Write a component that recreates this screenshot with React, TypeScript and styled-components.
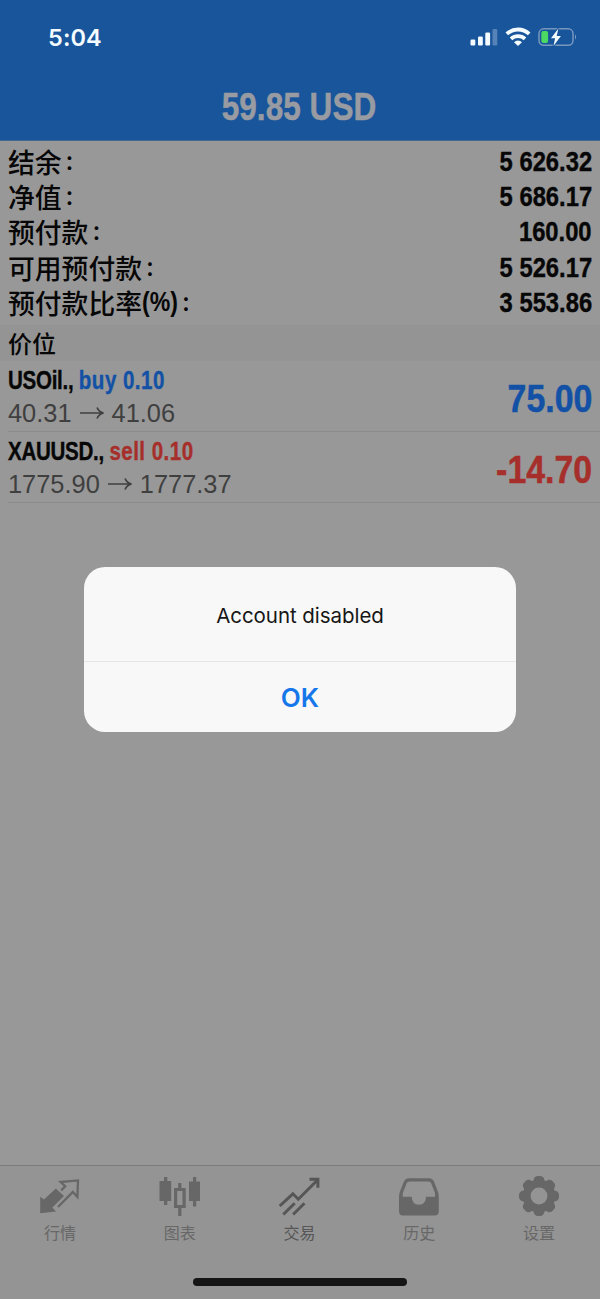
import React from "react";
import styled, { createGlobalStyle } from "styled-components";

const GlobalStyle = createGlobalStyle`
  *, *::before, *::after { box-sizing: border-box; }
  body { margin: 0; background: #989898; }
`;

const sans = `Inter, "Noto Sans CJK SC", sans-serif`;
const grotesk = `"Liberation Sans", "Noto Sans CJK SC", sans-serif`;

const Screen = styled.div`
  position: relative;
  display: flex;
  flex-direction: column;
  width: 600px;
  height: 1299px;
  overflow: hidden;
  background: #989898;
  color: #070707;
  font-family: ${sans};
`;

const Header = styled.header`
  display: flex;
  flex-direction: column;
  flex: none;
  height: 141px;
  background: #19559b;
  border-bottom: 1px solid #46688f;
`;

const StatusBar = styled.div`
  display: flex;
  align-items: center;
  justify-content: space-between;
  height: 74px;
  padding: 0 22px 0 48px;
`;

const Clock = styled.span`
  color: #f4fbff;
  font-size: 23.5px;
  font-weight: 600;
  letter-spacing: 0.1px;
`;

const StatusIcons = styled.div`
  display: flex;
  align-items: center;
`;

const Title = styled.h1`
  margin: 0;
  color: #999ba2;
  font-family: ${grotesk};
  font-size: 39px;
  font-weight: 700;
  line-height: 65px;
  text-align: center;
  -webkit-text-stroke: 0.5px currentColor;
  transform: translateX(-1px) scaleX(0.81);
`;

const Summary = styled.dl`
  flex: none;
  height: 184px;
  margin: 0;
  padding: 3px 8px 0;
`;

const SummaryRow = styled.div`
  display: flex;
  align-items: center;
  justify-content: space-between;
  height: 35.2px;
`;

const Label = styled.dt`
  display: flex;
  font-family: "Noto Sans CJK SC", sans-serif;
  font-size: 26.8px;
  font-weight: 500;
  line-height: 35px;
`;

const Unit = styled.span`
  width: 36px;
  font-family: ${grotesk};
  font-weight: 700;
  transform: scaleX(0.86);
  transform-origin: left;
`;

const Colon = styled.span`
  margin: -1px 0 1px 4px;
  font-family: ${sans};
  font-size: 26px;
`;

const Figure = styled.dd`
  margin: 0;
  padding-top: 2px;
  font-family: ${grotesk};
  font-size: 27px;
  font-weight: 700;
  line-height: 35px;
  -webkit-text-stroke: 0.4px currentColor;
  transform: scaleX(0.88);
  transform-origin: right;
`;

const SectionTitle = styled.h2`
  flex: none;
  height: 36px;
  margin: 0;
  padding-left: 8px;
  background: #949494;
  font-size: 24px;
  font-weight: 500;
  line-height: 40px;
`;

const Position = styled.article`
  display: flex;
  align-items: center;
  justify-content: space-between;
  flex: none;
  height: 71px;
  margin-left: 8px;
  padding-right: 8px;
  border-bottom: 1px solid #8b8b8c;
`;

const tone = { buy: "#1251a5", sell: "#a62f2b" };
type Side = keyof typeof tone;

const Deal = styled.div`
  padding-top: 1px;
  font-family: ${grotesk};
  font-size: 26px;
  font-weight: 700;
  line-height: 33px;
  letter-spacing: -0.35px;
  white-space: pre;
  -webkit-text-stroke: 0.4px currentColor;
  transform: scaleX(0.79);
  transform-origin: left;
`;

const Volume = styled.span<{ $side: Side }>`
  color: ${(p) => tone[p.$side]};
  letter-spacing: 0.6px;
`;

const Prices = styled.div`
  display: flex;
  align-items: center;
  gap: 7px;
  color: #3f3f3f;
  font-family: ${grotesk};
  font-size: 25.4px;
  line-height: 33px;
`;

const Profit = styled.div<{ $side: Side }>`
  padding-top: 5px;
  color: ${(p) => tone[p.$side]};
  font-family: ${grotesk};
  font-size: 38.5px;
  font-weight: 700;
  -webkit-text-stroke: 0.5px currentColor;
  transform: scaleX(0.88);
  transform-origin: right;
`;

const TabBar = styled.nav`
  display: grid;
  grid-template-columns: repeat(5, 1fr);
  flex: none;
  height: 134px;
  margin-top: auto;
  padding: 9px 1px 0 0;
  background: #949494;
  border-top: 1px solid #7b7b7b;
`;

const Tab = styled.a<{ $active?: boolean }>`
  display: flex;
  flex-direction: column;
  align-items: center;
  gap: 4px;
  color: ${(p) => (p.$active ? "#565656" : "#676767")};
  font-size: 16px;
  line-height: 25px;
  svg { display: block; }
`;

const HomeIndicator = styled.div`
  position: absolute;
  left: 193px;
  bottom: 13px;
  width: 214px;
  height: 8px;
  border-radius: 4px;
  background: #151515;
`;

const Overlay = styled.div`
  position: absolute;
  inset: 0;
  display: flex;
  align-items: center;
  justify-content: center;
`;

const Dialog = styled.div`
  width: 432px;
  height: 165px;
  border-radius: 21px;
  background: #f8f8f8;
  text-align: center;
`;

const Message = styled.p`
  height: 95px;
  margin: 0;
  border-bottom: 1px solid #e6e6e6;
  color: #161616;
  font-size: 20.5px;
  line-height: 97px;
  letter-spacing: -0.05px;
`;

const Confirm = styled.button`
  display: block;
  width: 100%;
  height: 70px;
  padding: 0;
  border: 0;
  background: none;
  color: #1677ea;
  font: 600 26px/71px ${sans};
`;

const Signal = () => (
  <svg width="37" height="24" viewBox="0 0 37 24" fill="#f4fbff">
    <rect x="0.5" y="14.5" width="4.8" height="6" rx="1.2" />
    <rect x="8" y="11.5" width="4.8" height="9" rx="1.2" />
    <rect x="15.3" y="7.5" width="4.8" height="13" rx="1.2" />
    <rect x="22.5" y="4" width="4.8" height="16.5" rx="1.2" opacity="0.28" />
  </svg>
);

const Wifi = () => (
  <svg width="31" height="24" viewBox="0 0 31 24" fill="none" stroke="#f4fbff" strokeWidth="3.8" overflow="visible">
    <path d="M-0.2 8.9A16.5 16.5 0 0 1 22.2 8.9" />
    <path d="M4 13.8A10.5 10.5 0 0 1 18 13.8" />
    <path d="M11 21L7 17.2A5.6 5.6 0 0 1 15 17.2Z" fill="#f4fbff" stroke="none" />
  </svg>
);

const Battery = () => (
  <svg width="40" height="24" viewBox="0 0 40 24">
    <rect x="1" y="3.8" width="34" height="16.5" rx="4.8" fill="none" stroke="#7797bf" strokeWidth="1.5" />
    <path d="M37 9.3Q39.3 12 37 14.7Z" fill="#7797bf" />
    <rect x="3.3" y="6.1" width="6.8" height="12" rx="2" fill="#4bd964" />
    <path d="M20.4 3.6L13 13.3H17.1L15.5 20.9L22.9 11H18.7Z" fill="#f4fbff" stroke="#19559b" strokeWidth="2" paintOrder="stroke" />
  </svg>
);

const PriceArrow = () => (
  <svg width="26" height="16" viewBox="0 0 26 16" fill="none" stroke="currentColor" strokeWidth="1.7">
    <path d="M1 8H24M18 2.5Q20 7 24.5 8Q20 9 18 13.5" />
  </svg>
);

const QuotesIcon = () => (
  <svg width="42" height="42" viewBox="0 0 42 42" fill="none" stroke="currentColor" strokeWidth="2.3">
    <path d="M1.2 38.3V21.8L5 24.6L16.8 13.6L25 21L13.4 32.4L17 36.4Z" fill="currentColor" stroke="none" />
    <path d="M22.2 15.4L26.2 11.2L21.6 7L39 5.4L38.4 22L33.8 17L19 32" />
  </svg>
);

const ChartIcon = () => (
  <svg width="42" height="42" viewBox="0 0 42 42" fill="currentColor">
    <path d="M5 2H8.3V6H12.2V26H8.3V30H5V26H0.5V6H5Z" />
    <path d="M34 2H37.2V6.5H41V26H37.2V31.5H34V26H30V6.5H34Z" />
    <path fillRule="evenodd" d="M19.2 8H22.4V13H26.7V33H22.4V41H19.2V33H15V13H19.2ZM18.2 16V30H23.5V16Z" />
  </svg>
);

const TradeIcon = () => (
  <svg width="42" height="42" viewBox="0 0 42 42" fill="none" stroke="currentColor" strokeWidth="3">
    <path d="M1.7 31L14.9 18.8L20.3 24.2L39.5 5" />
    <path d="M31.5 4.2H39.9V12.8" />
    <path d="M5.3 39.5L16.7 28.2M15.1 39.5L26.5 28.2" />
  </svg>
);

const HistoryIcon = () => (
  <svg width="42" height="42" viewBox="0 0 42 42" fill="currentColor">
    <path fillRule="evenodd" d="M11 3.2H31Q34.8 3.2 36.1 6.7L40 17Q40.8 19 40.8 22V36Q40.8 40.5 36.5 40.5H5Q1 40.5 1 36V22Q1 19 1.8 17L5.8 6.7Q7.2 3.2 11 3.2ZM11.5 6.4Q9.5 6.4 8.7 8.3L4.8 18V21.7H13.7Q14 29.4 20.9 29.8Q27.8 29.4 28.1 21.7H37V18L33.2 8.3Q32.4 6.4 30.4 6.4Z" />
  </svg>
);

const SettingsIcon = () => (
  <svg width="42" height="42" viewBox="0 0 42 42">
    <g fill="currentColor">
      {[0, 45, 90, 135].map((angle) => (
        <rect key={angle} x="15.7" y="1" width="10.6" height="40" rx="4.2" transform={`rotate(${angle} 21 21)`} />
      ))}
      <circle cx="21" cy="21" r="16.5" />
    </g>
    <circle cx="21" cy="21" r="8.4" fill="#949494" />
  </svg>
);

const summary = [
  { label: "结余", value: "5 626.32" },
  { label: "净值", value: "5 686.17" },
  { label: "预付款", value: "160.00" },
  { label: "可用预付款", value: "5 526.17" },
  { label: "预付款比率", unit: "(%)", value: "3 553.86" },
];

const positions: { symbol: string; side: Side; open: string; now: string; profit: string }[] = [
  { symbol: "USOil.", side: "buy", open: "40.31", now: "41.06", profit: "75.00" },
  { symbol: "XAUUSD.", side: "sell", open: "1775.90", now: "1777.37", profit: "-14.70" },
];

const tabs = [
  { label: "行情", Icon: QuotesIcon },
  { label: "图表", Icon: ChartIcon },
  { label: "交易", Icon: TradeIcon, active: true },
  { label: "历史", Icon: HistoryIcon },
  { label: "设置", Icon: SettingsIcon },
];

export default function App() {
  return (
    <Screen>
      <GlobalStyle />
      <Header>
        <StatusBar>
          <Clock>5:04</Clock>
          <StatusIcons>
            <Signal />
            <Wifi />
            <Battery />
          </StatusIcons>
        </StatusBar>
        <Title>59.85 USD</Title>
      </Header>
      <Summary>
        {summary.map(({ label, unit, value }) => (
          <SummaryRow key={label}>
            <Label>
              {label}
              {unit && <Unit>{unit}</Unit>}
              <Colon>:</Colon>
            </Label>
            <Figure>{value}</Figure>
          </SummaryRow>
        ))}
      </Summary>
      <SectionTitle>价位</SectionTitle>
      {positions.map((p) => (
        <Position key={p.symbol}>
          <div>
            <Deal>
              {p.symbol}, <Volume $side={p.side}>{p.side} 0.10</Volume>
            </Deal>
            <Prices>
              {p.open}
              <PriceArrow />
              {p.now}
            </Prices>
          </div>
          <Profit $side={p.side}>{p.profit}</Profit>
        </Position>
      ))}
      <TabBar>
        {tabs.map(({ label, Icon, active }) => (
          <Tab key={label} $active={active}>
            <Icon />
            {label}
          </Tab>
        ))}
      </TabBar>
      <HomeIndicator />
      <Overlay>
        <Dialog role="alertdialog">
          <Message>Account disabled</Message>
          <Confirm>OK</Confirm>
        </Dialog>
      </Overlay>
    </Screen>
  );
}
